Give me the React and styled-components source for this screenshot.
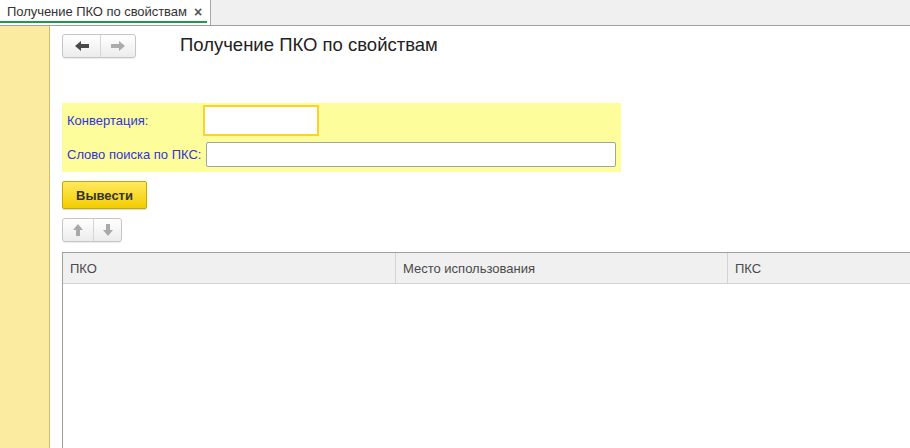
import React from 'react';
import styled, { createGlobalStyle } from 'styled-components';

const GlobalStyle = createGlobalStyle`
  html, body {
    margin: 0;
    padding: 0;
    height: 100%;
    overflow: hidden;
  }
  body {
    font-family: "Liberation Sans", Arial, sans-serif;
    background: #fff;
  }
  #root {
    height: 100%;
  }
  *, *::before, *::after {
    box-sizing: border-box;
  }
`;

const Page = styled.div`
  display: flex;
  flex-direction: column;
  height: 100vh;
  width: 100%;
`;

const TabBar = styled.div`
  display: flex;
  height: 26px;
  flex-shrink: 0;
  background: #f0f0f0;
  border-bottom: 1px solid #a0a0a0;
`;

const Tab = styled.div`
  position: relative;
  display: flex;
  align-items: center;
  gap: 7px;
  width: 211px;
  padding: 0 0 2px 7px;
  background: #fff;
  border-right: 1px solid #a9a9a9;
  font-size: 13px;
  color: #333;
  white-space: nowrap;
  letter-spacing: -0.05px;
  &::after {
    content: '';
    position: absolute;
    left: 0;
    right: 3px;
    bottom: 2px;
    height: 2px;
    background: #1e9a4a;
  }
`;

const Close = styled.span`
  font-size: 14px;
  font-weight: bold;
  color: #555;
  line-height: 1;
`;

const Body = styled.div`
  flex: 1;
  display: flex;
  min-height: 0;
`;

const Sidebar = styled.div`
  width: 50px;
  flex-shrink: 0;
  background: #fbeba0;
  border-right: 1px solid #c9bb78;
`;

const Main = styled.div`
  flex: 1;
  display: flex;
  flex-direction: column;
  padding: 8px 0 0 12px;
  min-width: 0;
  overflow: hidden;
`;

const HeaderRow = styled.div`
  display: flex;
  align-items: center;
  gap: 44px;
`;

const ButtonGroup = styled.div`
  display: flex;
  height: 24px;
  border: 1px solid #c6c6c6;
  border-radius: 3px;
  background: linear-gradient(#ffffff, #ececec);
  box-shadow: 0 1px 1px rgba(0, 0, 0, 0.08);
`;

const IconButton = styled.div`
  width: ${({ $w }) => $w}px;
  display: flex;
  align-items: center;
  justify-content: center;
  & + & {
    border-left: 1px solid #d6d6d6;
  }
`;

const Title = styled.h1`
  margin: 0 0 2px;
  font-size: 18.5px;
  font-weight: normal;
  color: #222;
`;

const Group = styled.div`
  margin-top: 45px;
  width: 559px;
  background: #fdfd9b;
  padding: 2px 5px 5px 5px;
  display: grid;
  grid-template-columns: 136px 1fr;
  row-gap: 6px;
  align-items: center;
`;

const Label = styled.label`
  font-size: 13px;
  color: #3333dd;
  white-space: nowrap;
`;

const Input = styled.div`
  height: ${({ $focused }) => ($focused ? 31 : 25)}px;
  width: ${({ $w }) => $w};
  background: #fff;
  border: ${({ $focused }) => ($focused ? '2px solid #ffd12a' : '1px solid #a3a3a3')};
  border-radius: ${({ $focused }) => ($focused ? 0 : 2)}px;
  margin-left: ${({ $ml }) => $ml || 0}px;
`;

const PrimaryButton = styled.button`
  margin-top: 9px;
  align-self: flex-start;
  width: 85px;
  height: 28px;
  border: 1px solid #c9a800;
  border-radius: 2px;
  background: linear-gradient(#ffe95e, #f3cd00);
  font-family: inherit;
  font-size: 13px;
  font-weight: bold;
  color: #333;
  box-shadow: 0 1px 1px rgba(0, 0, 0, 0.15);
  padding: 0;
`;

const Toolbar = styled.div`
  margin-top: 9px;
  align-self: flex-start;
`;

const Table = styled.div`
  margin-top: 10px;
  flex: 1;
  border: 1px solid #a0a0a0;
  border-right: none;
  border-bottom: none;
  width: 1000px;
`;

const HeaderCells = styled.div`
  display: grid;
  grid-template-columns: 332px 332px 1fr;
  height: 31px;
  background: #f0f0f0;
  border-bottom: 1px solid #d3d3d3;
`;

const HeaderCell = styled.div`
  display: flex;
  align-items: center;
  padding-left: 7px;
  font-size: 13px;
  color: #4a4a4a;
  & + & {
    border-left: 1px solid #d3d3d3;
  }
`;

const ArrowH = ({ dir, color }) => (
  <svg width="16" height="12" viewBox="0 0 16 12">
    <path
      d={dir === 'left' ? 'M1 6 L7 1 L7 4 L15 4 L15 8 L7 8 L7 11 Z' : 'M15 6 L9 1 L9 4 L1 4 L1 8 L9 8 L9 11 Z'}
      fill={color}
    />
  </svg>
);

const ArrowV = ({ dir }) => (
  <svg width="12" height="14" viewBox="0 0 12 14">
    <path
      d={dir === 'up' ? 'M6 1 L11 7 L8 7 L8 13 L4 13 L4 7 L1 7 Z' : 'M6 13 L11 7 L8 7 L8 1 L4 1 L4 7 L1 7 Z'}
      fill="#a9a9a9"
    />
  </svg>
);

const App = () => (
  <Page>
    <GlobalStyle />
    <TabBar>
      <Tab>
        Получение ПКО по свойствам
        <Close>×</Close>
      </Tab>
    </TabBar>
    <Body>
      <Sidebar />
      <Main>
        <HeaderRow>
          <ButtonGroup>
            <IconButton $w={37}>
              <ArrowH dir="left" color="#4a4a4a" />
            </IconButton>
            <IconButton $w={35}>
              <ArrowH dir="right" color="#ababab" />
            </IconButton>
          </ButtonGroup>
          <Title>Получение ПКО по свойствам</Title>
        </HeaderRow>
        <Group>
          <Label>Конвертация:</Label>
          <Input $focused $w="116px" />
          <Label>Слово поиска по ПКС:</Label>
          <Input $w="410px" $ml={3} />
        </Group>
        <PrimaryButton>Вывести</PrimaryButton>
        <Toolbar>
          <ButtonGroup>
            <IconButton $w={30}>
              <ArrowV dir="up" />
            </IconButton>
            <IconButton $w={28}>
              <ArrowV dir="down" />
            </IconButton>
          </ButtonGroup>
        </Toolbar>
        <Table>
          <HeaderCells>
            <HeaderCell>ПКО</HeaderCell>
            <HeaderCell>Место использования</HeaderCell>
            <HeaderCell>ПКС</HeaderCell>
          </HeaderCells>
        </Table>
      </Main>
    </Body>
  </Page>
);

export default App;
